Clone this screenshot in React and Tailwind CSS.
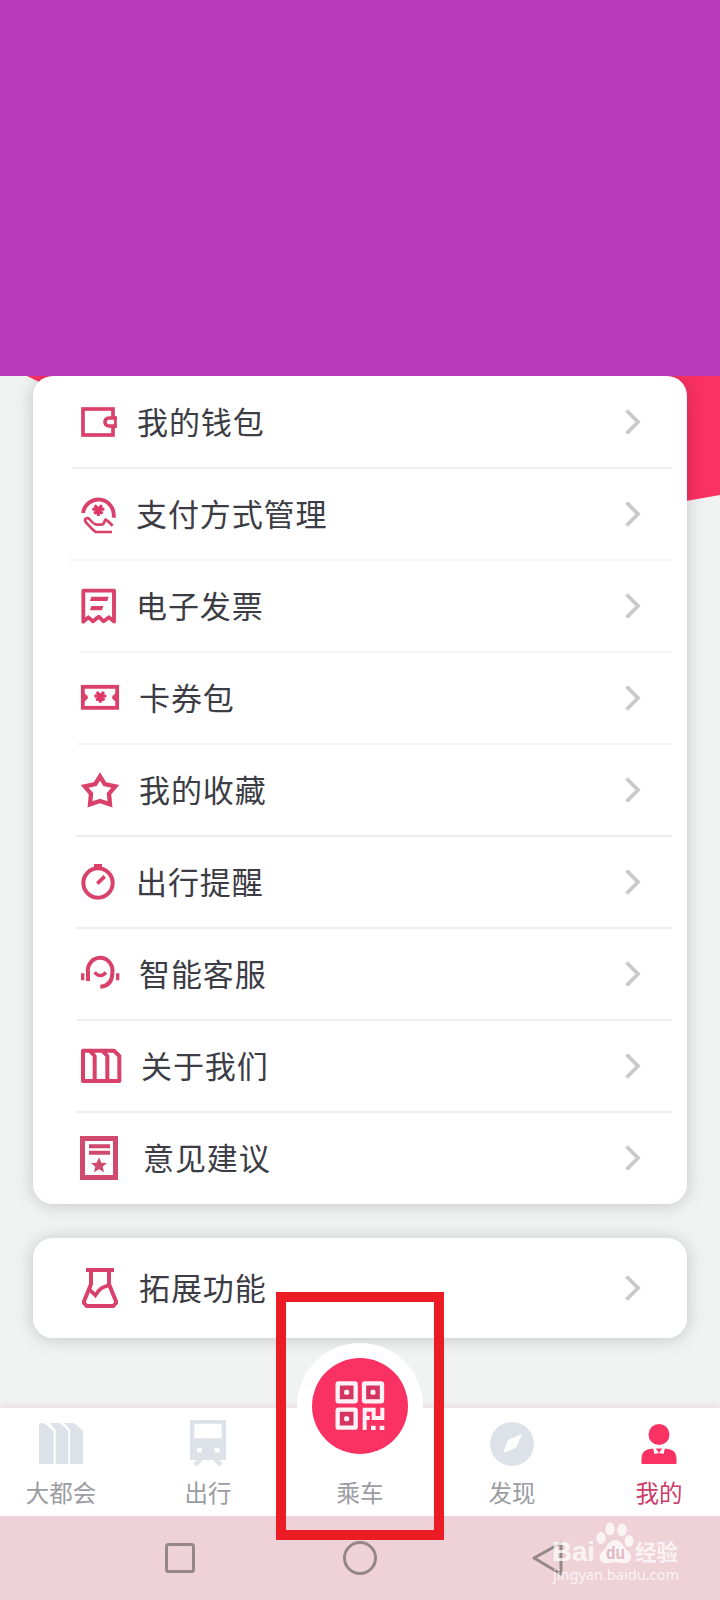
import React from 'react';

const STAR = 'M0 -24 L7 -8 L24 -7 L11 4 L15 21 L0 12 L-15 21 L-11 4 L-24 -7 L-7 -8 Z';

function Wallet() {
  return (
    <>
      <rect x="69" y="87" width="90" height="78" strokeWidth="11" />
      <path d="M170 114 H146 a11 12 0 0 0 0 24 H170" fill="#fff" strokeWidth="11" />
      <path d="M166 109 V144" strokeWidth="9" />
      <path d="M146 126 H158" stroke="#fff" strokeWidth="9" strokeLinecap="round" />
    </>
  );
}

function Yuan({ x, y }) {
  return (
    <g transform={`translate(${x} ${y})`} strokeWidth="9" stroke="#de3767">
      <path d="M-11 -15 L0 -4 L11 -15 M-18 -3 H18 M-13 9 L0 2 L13 9 M0 -5 V17" />
    </g>
  );
}

function Payment() {
  return (
    <>
      <path d="M69 399 a46 47 0 1 1 92 14" strokeWidth="11.500" />
      <Yuan x={115} y={391} />
      <path
        d="M156 456 H107 C99 451 88 438 77 426 C71 416 81 411 88 417 C97 428 103 434 110 434 H124 C132 434 133 426 136 419 C142 420 149 429 158 437"
        strokeWidth="8"
        strokeLinejoin="round"
      />
    </>
  );
}

function Invoice() {
  return (
    <>
      <path d="M70 185 V92 H162 V185 L147 172 L131 184 L116 170 L99 184 L85 172 Z" strokeWidth="11.500" strokeLinejoin="round" />
      <path d="M94 110 H146 L142 123 H90 Z M94 138 H130 L126 151 H90 Z" fill="#d9416a" stroke="none" />
    </>
  );
}

function Coupon() {
  return (
    <>
      <rect x="68.500" y="380.500" width="103" height="63" strokeWidth="11.500" />
      <path d="M69 397 L82 407 Q86 412 82 417 L69 428 Z M171 397 L158 407 Q154 412 158 417 L171 428 Z" fill="#d9416a" stroke="none" />
      <Yuan x={121} y={411} />
    </>
  );
}

function Favourite() {
  return <path d="M120 109 L134 132 L166 139 L147 161 L150 193 L120 183 L90 193 L93 161 L74 139 L106 132 Z" strokeWidth="13" />;
}

function Timer() {
  return (
    <>
      <circle cx="114" cy="429" r="44" strokeWidth="12" />
      <path d="M102 379 H126" strokeWidth="14" />
      <path d="M112 431 L134 409" strokeWidth="11" />
    </>
  );
}

function Service() {
  return (
    <>
      <path d="M84 183 V159 A37 39 0 1 1 157 158 C157 184 144 198 121 200" strokeWidth="12" />
      <path d="M104 157 Q120 177 138 157" strokeWidth="10" />
      <path d="M68 160 V181 M173 160 V181" strokeWidth="10" />
    </>
  );
}

function About() {
  return (
    <path
      d="M69 392 H89 L104 408 V483 H69 Z M89 392 H127 L142 408 V483 H104 M127 392 H162 L178 408 V483 H142"
      strokeWidth="12"
      strokeLinejoin="round"
    />
  );
}

function Feedback() {
  return (
    <g stroke="#cf4a6c">
      <rect x="67.500" y="85.500" width="99" height="117" strokeWidth="15" />
      <path d="M87 109 H150 M87 128 H150" strokeWidth="12" />
      <path d={STAR} transform="translate(117 166)" fill="#cf4a6c" stroke="none" />
    </g>
  );
}

function Flask() {
  return (
    <>
      <path d="M78 480 H162" strokeWidth="12" />
      <path d="M93 482 V523 L72 574 V579 L80 588 H160 L168 579 V574 L147 523 V482" strokeWidth="12" strokeLinejoin="round" />
      <path d="M87 537 L106 556 C120 533 127 532 146 526" strokeWidth="11" />
    </>
  );
}

const rows = [
  { label: '我的钱包', Icon: Wallet, view: '0 36 210 180', pad: 'pl-[7px]', line: 'left-[39px]', shade: 'bg-[#efefef]' },
  { label: '支付方式管理', Icon: Payment, view: '0 312 210 180', pad: 'pl-[6px]', line: 'left-[35px]', shade: 'bg-[#f5f5f5]' },
  { label: '电子发票', Icon: Invoice, view: '0 48 210 180', pad: 'pl-[6px]', line: 'left-[47px]', shade: 'bg-[#f6f6f6]' },
  { label: '卡券包', Icon: Coupon, view: '0 324 210 180', pad: 'pl-[9px]', line: 'left-[45px]', shade: 'bg-[#f4f4f4]' },
  { label: '我的收藏', Icon: Favourite, view: '0 60 210 180', pad: 'pl-[9px]', line: 'left-[43px]', shade: 'bg-[#ededed]' },
  { label: '出行提醒', Icon: Timer, view: '0 336 210 180', pad: 'pl-[6px]', line: 'left-[44px]', shade: 'bg-[#eeeeee]' },
  { label: '智能客服', Icon: Service, view: '0 72 210 180', pad: 'pl-[9px]', line: 'left-[44px]', shade: 'bg-[#eeeeee]' },
  { label: '关于我们', Icon: About, view: '0 348 210 180', pad: 'pl-[11px]', line: 'left-[44px]', shade: 'bg-[#eeeeee]' },
  { label: '意见建议', Icon: Feedback, view: '0 54 210 180', pad: 'pl-[13px]' },
];

function Row({ label, Icon, view, pad }) {
  return (
    <>
      <svg className="ml-[27px] h-[60px] w-[70px] shrink-0" viewBox={view} fill="none" stroke="#d9416a">
        <Icon />
      </svg>
      <span className={`${pad} flex-1 whitespace-nowrap pb-[2px] text-[31px] leading-[46px] tracking-[0.900px] text-[#3c3c45]`}>{label}</span>
      <svg className="mr-[46px] h-[28px] w-[16px]" viewBox="0 0 16 28" fill="none" stroke="#c9c9c9" strokeWidth="3.800">
        <path d="M1.500 2.500 L13 14 L1.500 25.500" />
      </svg>
    </>
  );
}

function Tab({ label, active, children }) {
  return (
    <div className="flex flex-col items-center">
      <svg className="mt-[8px] h-[56px] w-[60px]" viewBox="0 0 60 56" fill={active ? '#fa3163' : '#dce2e8'}>
        {children}
      </svg>
      <span className={`mt-[2px] text-[23.500px] leading-[36px] ${active ? 'text-[#cb3c68]' : 'text-[#9c9ca3]'}`}>{label}</span>
    </div>
  );
}

function QrIcon() {
  return (
    <svg className="h-[50px] w-[50px]" viewBox="0 0 150 150" fill="none" stroke="#fff1f5" strokeWidth="13">
      {[[8, 7], [87, 7], [8, 86]].map(([x, y]) => (
        <g key={`${x}-${y}`}>
          <rect x={x} y={y} width="54" height="54" rx="3" fill="#d43460" />
          <rect x={x + 19.5} y={y + 19.5} width="15" height="15" rx="5" fill="#fff1f5" stroke="none" />
        </g>
      ))}
      <path d="M89 147 V86 H116 V111 H142 V80 M89 111 H104" strokeWidth="12" />
      <path d="M108 134 h14 v13 h-14 Z M134 134 h14 v13 h-14 Z" fill="#fff1f5" stroke="none" />
    </svg>
  );
}

function Watermark() {
  return (
    <svg
      className="absolute left-[540px] top-[4px] h-[80px] w-[150px]"
      viewBox="0 0 150 80"
      fill="#fff"
      fillOpacity="0.75"
      fontFamily="'Liberation Sans', 'Noto Sans CJK SC', sans-serif"
    >
      <text x="12" y="41" fontSize="28" fontWeight="700" textLength="43" lengthAdjust="spacingAndGlyphs">Bai</text>
      <ellipse cx="61" cy="18" rx="4.500" ry="6" />
      <ellipse cx="70" cy="9" rx="4.700" ry="6.500" />
      <ellipse cx="82" cy="10" rx="4.700" ry="6.500" />
      <ellipse cx="89" cy="21" rx="4.500" ry="6" />
      <path d="M75 20 C82 20 84 28 88 31 C95 38 89 45 81 43 C77 42 73 42 69 43 C60 45 56 36 63 31 C67 28 68 20 75 20 Z" />
      <text x="66" y="39" fontSize="18" fontWeight="700" fill="#dfb9c2" fillOpacity="1" textLength="19" lengthAdjust="spacingAndGlyphs">du</text>
      <text x="95" y="40" fontSize="22" fontWeight="700" textLength="43" lengthAdjust="spacingAndGlyphs">经验</text>
      <text x="13" y="60" fontSize="14" fontFamily="'Noto Sans', sans-serif" textLength="126" lengthAdjust="spacingAndGlyphs">jingyan.baidu.com</text>
    </svg>
  );
}

export default function App() {
  return (
    <div className="relative flex h-[1600px] w-[720px] flex-col overflow-hidden bg-[#f1f3f3] font-['Noto_Sans_CJK_SC',sans-serif]">
      <div className="h-[376px] shrink-0 bg-[#b63ab9]" />
      <main className="relative flex h-[1032px] shrink-0 flex-col overflow-hidden px-[33px]">
        <svg className="absolute left-0 top-0 h-[140px] w-[720px]" viewBox="0 0 720 140" fill="#fa3163">
          <path d="M27 0 C180 75 430 175 720 119 V0 Z" />
        </svg>
        <section className="relative h-[828px] shrink-0 rounded-[20px] bg-white shadow-[0_1px_18px_rgba(0,0,0,0.19)]">
          {rows.map((row) => (
            <div key={row.label} className="relative flex h-[92px] items-center">
              <Row {...row} />
              {row.line && <div className={`absolute -bottom-px right-[15px] h-[2px] ${row.line} ${row.shade}`} />}
            </div>
          ))}
        </section>
        <section className="relative mt-[34px] flex h-[100px] shrink-0 items-center rounded-[20px] bg-white shadow-[0_1px_18px_rgba(0,0,0,0.19)]">
          <Row label="拓展功能" Icon={Flask} view="0 444 210 180" pad="pl-[9px]" />
        </section>
      </main>
      <nav className="relative grid h-[108px] shrink-0 grid-cols-[122px_172px_132px_172px_122px] bg-white shadow-[0_-1px_8px_rgba(220,120,145,0.25)]">
        <Tab label="大都会">
          <path d="M8 9 Q8 7 10 7 H13 L22.700 15 V48 H8 Z M19 7 H29 L37.300 15 V48 H24.700 V14 Z M33.500 7 H43 L52 15 V48 H39 V14 Z" />
        </Tab>
        <Tab label="出行">
          <path fillRule="evenodd" d="M12 4 H48 V44 H12 Z M16.300 7.700 V22.300 H43.700 V7.700 Z M19 32 h4.800 v4.500 h-4.800 Z M36.600 32 h4.800 v4.500 h-4.800 Z" />
          <path d="M23 43 L17 49 M37 43 L43 49" stroke="#dce2e8" strokeWidth="4.500" />
        </Tab>
        <div className="flex flex-col items-center">
          <div className="-mt-[65px] flex h-[126px] w-[126px] items-center justify-center rounded-full bg-white">
            <div className="flex h-[96px] w-[96px] items-center justify-center rounded-full bg-[#fa3163]">
              <QrIcon />
            </div>
          </div>
          <span className="mt-[5px] text-[23.500px] leading-[36px] text-[#9c9ca3]">乘车</span>
        </div>
        <Tab label="发现">
          <circle cx="30" cy="28" r="22" />
          <path d="M21 37 L26 24 L40 18 L34 32 Z" fill="#fff" />
        </Tab>
        <Tab label="我的" active>
          <circle cx="30" cy="18.500" r="10.500" />
          <path d="M12.500 48 Q12 38 15 35.500 Q18 33 24 32.500 H36 Q42 33 45 35.500 Q48 38 47.500 48 Z" />
          <path d="M24 32 L25.500 38 L30 37 L26.500 32 Z M36 32 L34.500 38 L30 37 L33.500 32 Z" fill="#fff" />
        </Tab>
      </nav>
      <footer className="relative h-[84px] shrink-0 bg-[#eed2d7]">
        <svg className="h-[84px] w-[720px]" viewBox="0 0 720 84" fill="none" stroke="#968787" strokeWidth="3">
          <rect x="166.500" y="28.500" width="27" height="27" rx="2" />
          <circle cx="360" cy="42" r="15.500" />
          <path d="M534 42 L561 27 V58 Z" strokeLinejoin="round" />
        </svg>
        <Watermark />
      </footer>
      <div className="absolute left-[276px] top-[1292px] h-[248px] w-[168px] border-[10px] border-[#ec1c24]" />
    </div>
  );
}
